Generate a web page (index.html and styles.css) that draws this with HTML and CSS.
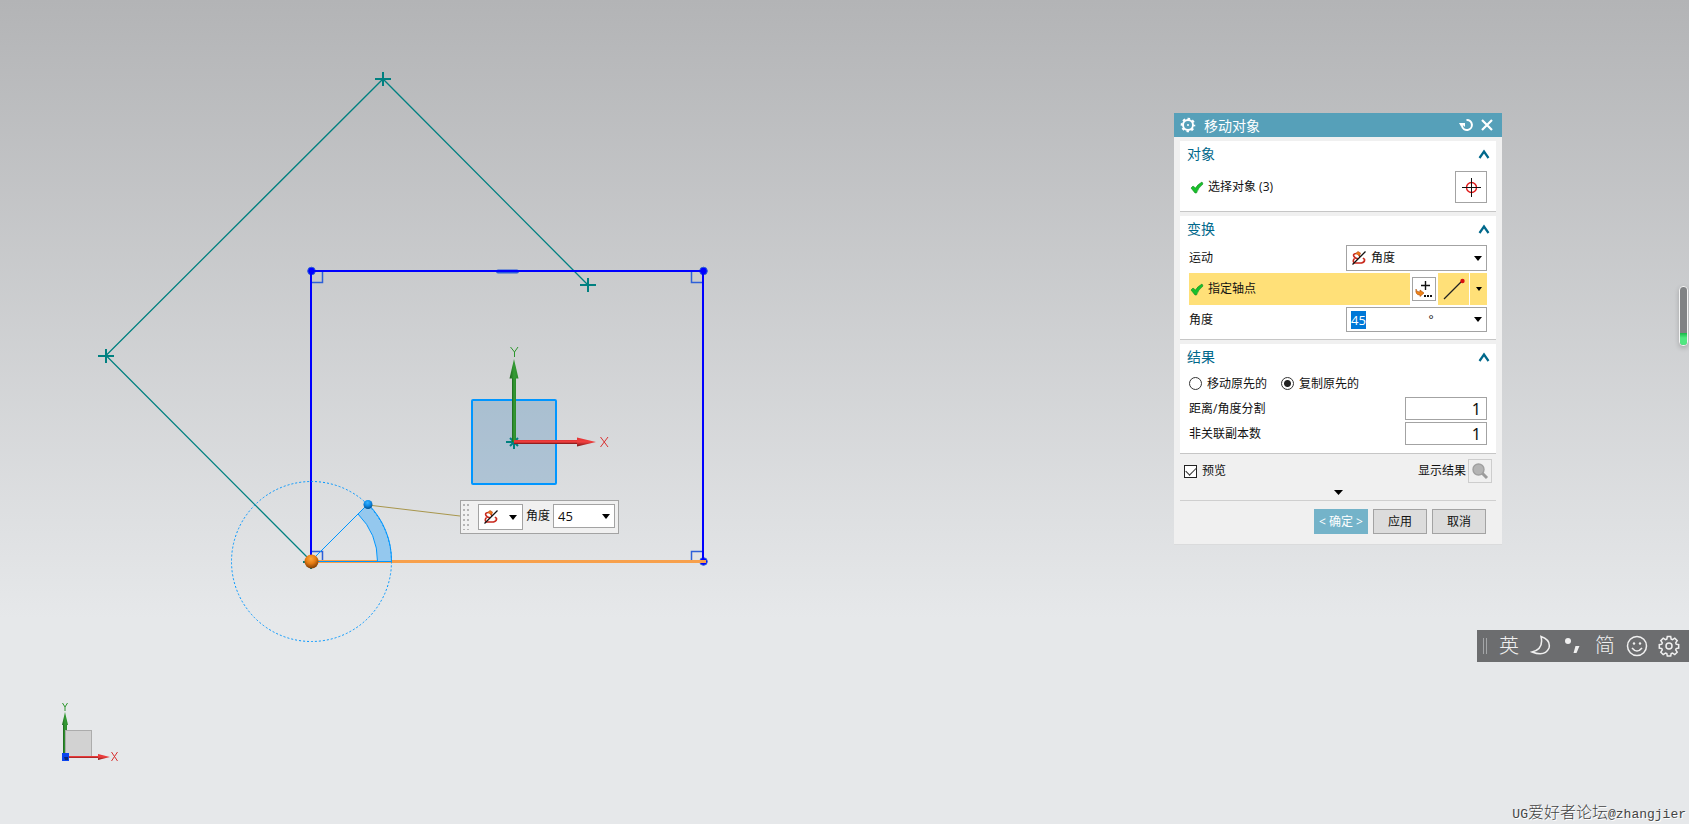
FILE: index.html
```html
<!DOCTYPE html>
<html lang="zh-CN">
<head>
<meta charset="utf-8">
<title>移动对象</title>
<link rel="stylesheet" href="styles.css">
</head>
<body>
<main class="viewport">
  <svg class="scene" role="img" aria-label="草图">
    <defs>
      <radialGradient id="orange-ball" cx="45%" cy="30%" r="70%"><stop offset="0" stop-color="#ffa63c"/><stop offset=".5" stop-color="#e57c14"/><stop offset="1" stop-color="#7c3c04"/></radialGradient>
      <radialGradient id="blue-ball" cx="45%" cy="30%" r="70%"><stop offset="0" stop-color="#38b4ff"/><stop offset=".5" stop-color="#0f8ae6"/><stop offset="1" stop-color="#04508c"/></radialGradient>
      <linearGradient id="green-shaft"><stop offset="0" stop-color="#1c641c"/><stop offset=".5" stop-color="#349c34"/><stop offset="1" stop-color="#2c882c"/></linearGradient>
      <linearGradient id="red-shaft" x2="0" y2="1"><stop offset="0" stop-color="#e23232"/><stop offset=".5" stop-color="#f04040"/><stop offset="1" stop-color="#741414"/></linearGradient>
    </defs>
    <g class="copy-outline">
      <path d="M588 285L383 79L106 355.500L311 561"/>
      <path class="cross" d="M375 79h16M383 72v14M580 285h16M588 278v14M98 356h16M106 349v14M303 562h16M311 555v14"/>
    </g>
    <g class="corner-marks">
      <path d="M311 282.500h11.500V271M703 282.500h-11.500V271M311 551.500h11.500V561M703 551.500h-11.500V561"/>
      <circle cx="311.500" cy="271" r="3.800"/><circle cx="703.500" cy="271" r="3.800"/><circle cx="703.500" cy="561.500" r="3.800"/>
      <path class="mid-mark" d="M498 271.500h19"/>
    </g>
    <path class="sketch" d="M311 561V271H703V561"/>
    <path class="axis-edge" d="M311 561.500H706"/>
    <g class="rotor">
      <path class="sector" d="M377.500 561.500A67 67 0 0 0 358 514L368 504A80 80 0 0 1 391.500 561.500Z"/>
      <circle class="dial" cx="311.500" cy="561.500" r="80"/>
      <path d="M311 561L368 504M311 561.500H391"/>
    </g>
    <path class="leader" d="M368 505L460 516"/>
    <circle cx="368" cy="504.500" r="4.500" fill="url(#blue-ball)"/>
    <circle cx="311.500" cy="561.500" r="7" fill="url(#orange-ball)"/>
    <g class="csys">
      <rect class="plane" x="472" y="400" width="84" height="84" rx="1"/>
      <path class="cross" d="M506 442h16M514 436v13M510 438l8 8M518 438l-8 8"/>
      <rect x="512" y="377" width="4" height="65" fill="url(#green-shaft)"/>
      <path d="M514 359L509.500 378.500H518.500Z" fill="url(#green-shaft)"/>
      <rect x="514" y="440" width="65" height="4" fill="url(#red-shaft)"/>
      <path d="M596 442L577 437.500V446.500Z" fill="url(#red-shaft)"/>
      <path class="label-y" d="M510.500 347L514.500 352L518 347M514.500 352V357"/>
      <path class="label-x" d="M600.500 437L608 447M608 437L600.500 447"/>
    </g>
    <g class="triad">
      <rect x="63" y="722" width="4" height="35" fill="url(#green-shaft)"/>
      <path d="M65 712L62 725h6Z" fill="url(#green-shaft)"/>
      <rect class="face" x="65.500" y="730.500" width="26" height="26"/>
      <rect x="66" y="756" width="34" height="2" fill="url(#red-shaft)"/>
      <path d="M110 757L98 754V760Z" fill="url(#red-shaft)"/>
      <rect x="62" y="753" width="7" height="8" fill="#0b45ee"/>
      <path d="M64 757h4v3h-3z" fill="#0a2878"/>
      <path class="label-y" d="M62.500 703L65 707L67.500 703M65 707V711"/>
      <path class="label-x" d="M111.500 752L117.500 761M117.500 752L111.500 761"/>
    </g>
  </svg>

  <form class="mini-bar">
    <svg class="grip" width="8" height="26" viewBox="0 0 8 26"><path d="M1 0v26M5 0v26"/></svg>
    <div class="combo mini-type">
      <svg class="rotate-icon" width="16" height="16" viewBox="0 0 16 16"><path class="arc" d="M5 3.500Q1.500 4 3 6.500T7 8.500M3.500 8.500Q1 11 3.500 13H10.500Q14 12 13.500 9.500L12 8M8 5L9 7"/><path class="head" d="M4.500 3.500L7 1.500L9.500 3L8.500 6L6.500 4.500Z"/><path class="slash" d="M1.500 14.500L14.500 1.500"/></svg>
      <select aria-label="运动类型"><option></option></select>
      <svg class="caret" width="8" height="5" viewBox="0 0 8 5"><path d="M0 0h8L4 5z"/></svg>
    </div>
    <label for="mini-angle">角度</label>
    <div class="combo mini-value">
      <input id="mini-angle" value="45">
      <svg class="caret" width="8" height="5" viewBox="0 0 8 5"><path d="M0 0h8L4 5z"/></svg>
    </div>
  </form>

  <form class="dialog" aria-labelledby="dialog-title">
    <header class="title-bar">
      <svg width="16" height="16" viewBox="0 0 16 16"><circle cx="8" cy="8" r="5" fill="none" stroke="#fff" stroke-width="2"/><circle cx="8" cy="8" r="6.300" fill="none" stroke="#fff" stroke-width="2" stroke-dasharray="2.500 2.450" stroke-dashoffset="1.250"/><circle cx="8" cy="8" r="1" fill="#fff"/></svg>
      <h1 id="dialog-title">移动对象</h1>
      <button type="button" class="plain" aria-label="重置"><svg width="14" height="14" viewBox="0 0 14 14"><path d="M7.500 2A5 5 0 1 1 3 8" fill="none" stroke="#fff" stroke-width="2"/><path d="M0 5H6V9L4.500 7.500L2 8.500Z" fill="#fff"/></svg></button>
      <button type="button" class="plain" aria-label="关闭"><svg width="12" height="12" viewBox="0 0 12 12"><path d="M1 1L11 11M11 1L1 11" fill="none" stroke="#fff" stroke-width="2.200"/></svg></button>
    </header>

    <section class="group group-object">
      <div class="group-head"><h2>对象</h2><button type="button" class="plain" aria-label="折叠对象"><svg class="chevron" width="12" height="10" viewBox="0 0 12 10"><path d="M1.500 9L6 2.500L10.500 9"/></svg></button></div>
      <div class="pick-row">
        <svg class="tick" width="14" height="14" viewBox="0 0 14 14"><path d="M1 8L3 6L5.500 8Q8 4 12 2L13 4Q8 8 6.500 13H5Z"/></svg>
        <span class="grow">选择对象 (3)</span>
        <button type="button" class="target" aria-label="选择对象"><svg width="20" height="20" viewBox="0 0 20 20"><circle cx="10.500" cy="10.500" r="5" fill="none" stroke="#e01818" stroke-width="1.400"/><path d="M1 10.500H20M10.500 1V20" stroke="#111"/></svg></button>
      </div>
    </section>

    <section class="group group-transform">
      <div class="group-head"><h2>变换</h2><button type="button" class="plain" aria-label="折叠变换"><svg class="chevron" width="12" height="10" viewBox="0 0 12 10"><path d="M1.500 9L6 2.500L10.500 9"/></svg></button></div>
      <div class="field-row">
        <label for="motion">运动</label>
        <div class="combo wide">
          <svg class="rotate-icon" width="16" height="16" viewBox="0 0 16 16"><path class="arc" d="M5 3.500Q1.500 4 3 6.500T7 8.500M3.500 8.500Q1 11 3.500 13H10.500Q14 12 13.500 9.500L12 8M8 5L9 7"/><path class="head" d="M4.500 3.500L7 1.500L9.500 3L8.500 6L6.500 4.500Z"/><path class="slash" d="M1.500 14.500L14.500 1.500"/></svg>
          <select id="motion"><option>角度</option></select>
          <svg class="caret" width="8" height="5" viewBox="0 0 8 5"><path d="M0 0h8L4 5z"/></svg>
        </div>
      </div>
      <div class="axis-row">
        <div class="axis-label">
          <svg class="tick" width="14" height="14" viewBox="0 0 14 14"><path d="M1 8L3 6L5.500 8Q8 4 12 2L13 4Q8 8 6.500 13H5Z"/></svg>
          <span>指定轴点</span>
        </div>
        <button type="button" class="point" aria-label="点对话框"><svg width="20" height="20" viewBox="0 0 20 20"><path d="M7 6.500h9M11.500 2v9" stroke="#111" stroke-width="1.400"/><path d="M2 10Q2 13 6 13V11L10 14L6 17.500V16Q1 16 2 10Z" fill="#f08418" stroke="#a84c08" stroke-width=".6"/><path d="M10 16h2v2h-2zM13 16h2v2h-2zM16 16h2v2h-2z" fill="#111"/></svg></button>
        <button type="button" class="endpoint" aria-label="端点"><svg width="24" height="24" viewBox="0 0 24 24"><path d="M2 22L20 4" stroke="#222" stroke-width="1.300"/><circle cx="20.500" cy="4" r="2.200" fill="#d81010"/></svg></button>
        <button type="button" class="endpoint-menu" aria-label="更多点类型"><svg width="6" height="4" viewBox="0 0 6 4"><path d="M0 0h6L3 4z"/></svg></button>
      </div>
      <div class="field-row">
        <label for="angle">角度</label>
        <div class="combo wide angle">
          <span class="selected"><input id="angle" value="45"></span>
          <span class="unit">°</span>
          <svg class="caret" width="8" height="5" viewBox="0 0 8 5"><path d="M0 0h8L4 5z"/></svg>
        </div>
      </div>
    </section>

    <section class="group group-result">
      <div class="group-head"><h2>结果</h2><button type="button" class="plain" aria-label="折叠结果"><svg class="chevron" width="12" height="10" viewBox="0 0 12 10"><path d="M1.500 9L6 2.500L10.500 9"/></svg></button></div>
      <div class="radio-row">
        <label><input type="radio" name="mode">移动原先的</label>
        <label><input type="radio" name="mode" checked>复制原先的</label>
      </div>
      <div class="number-row"><label for="division">距离/角度分割</label><input id="division" value="1"></div>
      <div class="number-row"><label for="copies">非关联副本数</label><input id="copies" value="1"></div>
    </section>

    <div class="preview-row">
      <label class="grow"><input type="checkbox" checked>预览</label>
      <span>显示结果</span>
      <button type="button" class="lens" aria-label="显示结果"><svg width="18" height="18" viewBox="0 0 18 18"><path d="M10.500 10.500L16 16" stroke="#9c9c9c" stroke-width="3"/><circle cx="7.500" cy="7.500" r="5.500" fill="#b4b4b4" stroke="#a0a0a0" stroke-width="1.400"/></svg></button>
    </div>
    <button type="button" class="plain more" aria-label="更多"><svg width="9" height="5" viewBox="0 0 9 5"><path d="M0 0h9L4.500 5z"/></svg></button>
    <footer class="actions">
      <button type="submit" class="primary">&lt; 确定 &gt;</button>
      <button type="button">应用</button>
      <button type="button">取消</button>
    </footer>
  </form>

  <div class="battery"><span></span></div>

  <div class="ime">
    <svg width="6" height="16" viewBox="0 0 6 16"><path d="M1.500 0v16M4.500 0v16" stroke="#a4a6a8"/></svg>
    <button type="button">英</button>
    <button type="button" aria-label="半角"><svg width="22" height="22" viewBox="0 0 22 22"><path d="M11 1.500Q21 5 19 13Q15 22 2 17Q14 14 11 1.500Z"/></svg></button>
    <button type="button" aria-label="中文标点"><svg width="22" height="22" viewBox="0 0 22 22"><circle class="solid" cx="6" cy="6" r="3"/><path class="solid" d="M13.500 11h4l-3 7h-3z"/></svg></button>
    <button type="button">简</button>
    <button type="button" aria-label="表情"><svg width="22" height="22" viewBox="0 0 22 22"><circle cx="11" cy="11" r="9.500"/><path d="M6 13Q11 19 16 13"/><circle class="solid" cx="8" cy="8.500" r="1.200"/><circle class="solid" cx="14" cy="8.500" r="1.200"/></svg></button>
    <button type="button" aria-label="设置"><svg width="22" height="22" viewBox="0 0 22 22"><circle cx="11" cy="11" r="3"/><path d="M9.300 1.500h3.400l.5 2.700 1.300.5 2.300-1.500 2.400 2.400-1.500 2.300.5 1.300 2.500.5v3.400l-2.500.5-.5 1.300 1.500 2.300-2.400 2.400-2.300-1.500-1.300.5-.5 2.400H9.300l-.5-2.400-1.300-.5-2.300 1.500-2.400-2.400 1.500-2.300-.5-1.300-2.500-.5V9.700l2.500-.5.500-1.300-1.500-2.300 2.400-2.400 2.300 1.500 1.300-.5z"/></svg></button>
  </div>

  <p class="watermark"><span>UG</span>爱好者论坛<span>@zhangjier</span></p>
</main>
</body>
</html>
```
FILE: styles.css
```css
* { box-sizing: border-box; }
body { margin: 0; font-family: "Open Sans", "Noto Sans CJK SC", sans-serif; font-size: 12px; line-height: 18px; color: #111; }
h1, h2, p { margin: 0; font-weight: 400; }
svg { display: block; flex: none; }
button, input, select { font: inherit; color: inherit; margin: 0; padding: 0; border: 0; border-radius: 0; outline: 0; }
button { display: flex; align-items: center; justify-content: center; }
.grow { flex: 1; }
.plain { background: none; }

.viewport { position: relative; height: 100vh; overflow: hidden; background: linear-gradient(#b3b4b6, #e6e8ea 75%); }

/* Sketch drawing */
.scene { position: absolute; inset: 0; width: 100%; height: 100%; fill: none; }
.copy-outline { stroke: #008080; stroke-width: 1.3; }
.cross { stroke: #008080; stroke-width: 2; }
.corner-marks { stroke: #2d5fd8; stroke-width: 1.5; }
.corner-marks circle { fill: #00f; stroke-width: 1; }
.corner-marks .mid-mark { stroke-width: 4; stroke-linecap: round; }
.sketch { stroke: #00f; stroke-width: 2; }
.axis-edge { stroke: #f7a04c; stroke-width: 3; }
.rotor { stroke: #0096ff; stroke-width: 1; }
.rotor .sector { fill: #94c8ee; }
.rotor .dial { stroke-dasharray: 2 2; }
.leader { stroke: #a8964c; stroke-width: 1; }
.plane { fill: #5090c0; fill-opacity: .32; stroke: #0096ff; stroke-width: 2; }
.label-y { stroke: #2c962c; }
.label-x { stroke: #d83030; }
.face { fill: #d2d2d2; stroke: #acacac; }

/* Combo boxes */
.combo { display: flex; align-items: center; background: #fff; border: 1px solid #a3a3a3; }
.combo select, .combo input { appearance: none; background: none; flex: 1; min-width: 0; width: 100%; height: 18px; }
.rotate-icon .arc { fill: none; stroke: #c8281c; stroke-width: 1.6; }
.rotate-icon .head { fill: #f07818; stroke: #b43c10; stroke-width: .6; }
.rotate-icon .slash { stroke: #111; stroke-width: 1.3; }

/* On-canvas input bar */
.mini-bar { position: absolute; left: 460px; top: 500px; display: flex; gap: 3px; padding: 3px 3px 3px 2px; background: #f0f0f0; border: 1px solid #a3a3a3; }
.grip path { stroke: #b4b4b4; stroke-width: 2; stroke-dasharray: 2 3; }
.mini-type { width: 45px; height: 26px; padding: 0 5px 0 4px; margin-left: 4px; }
.mini-bar label { line-height: 24px; }
.mini-value { width: 62px; height: 24px; padding: 0 4px; font-size: 13px; }

/* Dialog */
.dialog { position: absolute; right: 187px; top: 113px; width: 328px; background: #f0f0f0; border-bottom: 1px solid #dadbdc; }
.title-bar { display: flex; align-items: center; gap: 8px; height: 24px; padding: 0 9px 0 6px; background: #56a0b9; color: #fff; }
.title-bar h1 { flex: 1; font-size: 14px; line-height: 22px; padding-top: 2px; }
.group { margin: 4px 6px 3px; padding: 0 8px; background: #fff; border-bottom: 1px solid #c6c6c6; }
.group-object { padding-bottom: 8px; }
.group-transform { padding-bottom: 7px; }
.group-result { padding-bottom: 8px; }
.group-head { display: flex; align-items: center; justify-content: space-between; height: 26px; margin: 0 -2px 0 -1px; color: #00688b; }
.group-head h2 { font-size: 14px; }
.chevron path { fill: none; stroke: #00688b; stroke-width: 2.200; }
.pick-row { display: flex; align-items: center; gap: 4px; margin-top: 4px; padding: 0 1px 0 2px; }
.tick { fill: #18c02c; stroke: #108c1c; stroke-width: .6; }
.target { width: 32px; height: 32px; background: #fff; border: 1px solid #a3a3a3; }
.field-row { display: flex; align-items: center; justify-content: space-between; padding: 0 1px; }
.field-row .wide { width: 141px; height: 26px; padding: 0 4px; gap: 4px; }
.field-row .angle { height: 25px; }
.group-transform .group-head { margin-bottom: 3px; }
.axis-row { display: flex; align-items: center; height: 32px; margin: 2px 1px; }
.axis-label { display: flex; flex: 1; align-items: center; gap: 4px; height: 32px; padding-left: 1px; background: #ffe078; }
.point { width: 24px; height: 24px; margin: 0 2px; background: #fff; border: 1px solid #a3a3a3; }
.endpoint { width: 31px; height: 32px; margin-right: 1px; background: #ffe078; }
.endpoint-menu { width: 17px; height: 32px; background: #ffe078; }
.selected { display: flex; width: 15px; background: #0078d7; color: #fff; }
.selected input { font-size: 13px; }
.angle .unit { flex: 1; text-align: center; padding-left: 22px; }

.radio-row { display: flex; align-items: center; gap: 14px; height: 27px; margin: 0 1px; }
.radio-row label { display: flex; align-items: center; gap: 5px; }
.radio-row input { appearance: none; width: 13px; height: 13px; background: #fff; border: 1px solid #333; border-radius: 50%; }
.radio-row input:checked { background: radial-gradient(circle, #222 0 3px, #fff 4px); }
.number-row { display: flex; align-items: center; justify-content: space-between; height: 23px; margin: 0 1px 2px; }
.number-row input { width: 82px; height: 23px; padding: 0 5px; text-align: right; font-family: "Noto Sans", sans-serif; font-size: 16px; background: #fff; border: 1px solid #a3a3a3; }
.number-row:last-child { margin-bottom: 0; }

.preview-row { display: flex; align-items: center; gap: 2px; margin: 5px 10px 0; }
.preview-row label { display: flex; align-items: center; gap: 5px; }
.preview-row input { appearance: none; width: 13px; height: 13px; background: #fff; border: 1px solid #222; display: grid; place-items: center; }
.preview-row input:checked::before { content: ""; width: 9px; height: 5px; border: solid #333; border-width: 0 0 1px 1px; transform: translateY(-1px) rotate(-45deg); }
.lens { width: 24px; height: 24px; background: none; border: 1px solid #cdcdcd; }
.more { width: 100%; height: 17px; padding-top: 2px; }
.actions { display: flex; justify-content: flex-end; gap: 5px; margin: 0 6px; padding: 8px 10px 10px; border-top: 1px solid #cfcfcf; }
.actions button { width: 54px; height: 25px; background: #dcdcdc; border: 1px solid #a3a3a3; white-space: pre; }
.actions .primary { background: #74b3c9; border-color: #74b3c9; color: #fff; }

/* Desktop overlays */
.battery { position: absolute; right: 1px; top: 286px; width: 9px; height: 60px; display: flex; align-items: flex-end; overflow: hidden; background: #808284; border: 1px solid #f4f4f4; border-radius: 4px; box-shadow: 0 2px 5px #0003; }
.battery span { width: 100%; height: 12px; background: linear-gradient(#18b848, #50e880 40%); }
.ime { position: absolute; right: 0; top: 630px; display: flex; align-items: center; gap: 10px; height: 32px; padding: 0 9px 0 5px; background: #6c6d6f; color: #f0f0f0; }
.ime button { width: 22px; height: 32px; background: none; font-size: 20px; font-weight: 300; }
.ime button svg { fill: none; stroke: #f0f0f0; stroke-width: 1.500; }
.ime .solid { fill: #f0f0f0; stroke: none; }
.watermark { position: absolute; right: 3px; bottom: 1px; font-family: "Noto Sans CJK SC", sans-serif; font-size: 16px; font-weight: 300; line-height: 16px; color: #444; text-shadow: 1px 1px 0 #fff; white-space: nowrap; }
.watermark span { font-family: "Liberation Mono", monospace; font-size: 13px; }
```
